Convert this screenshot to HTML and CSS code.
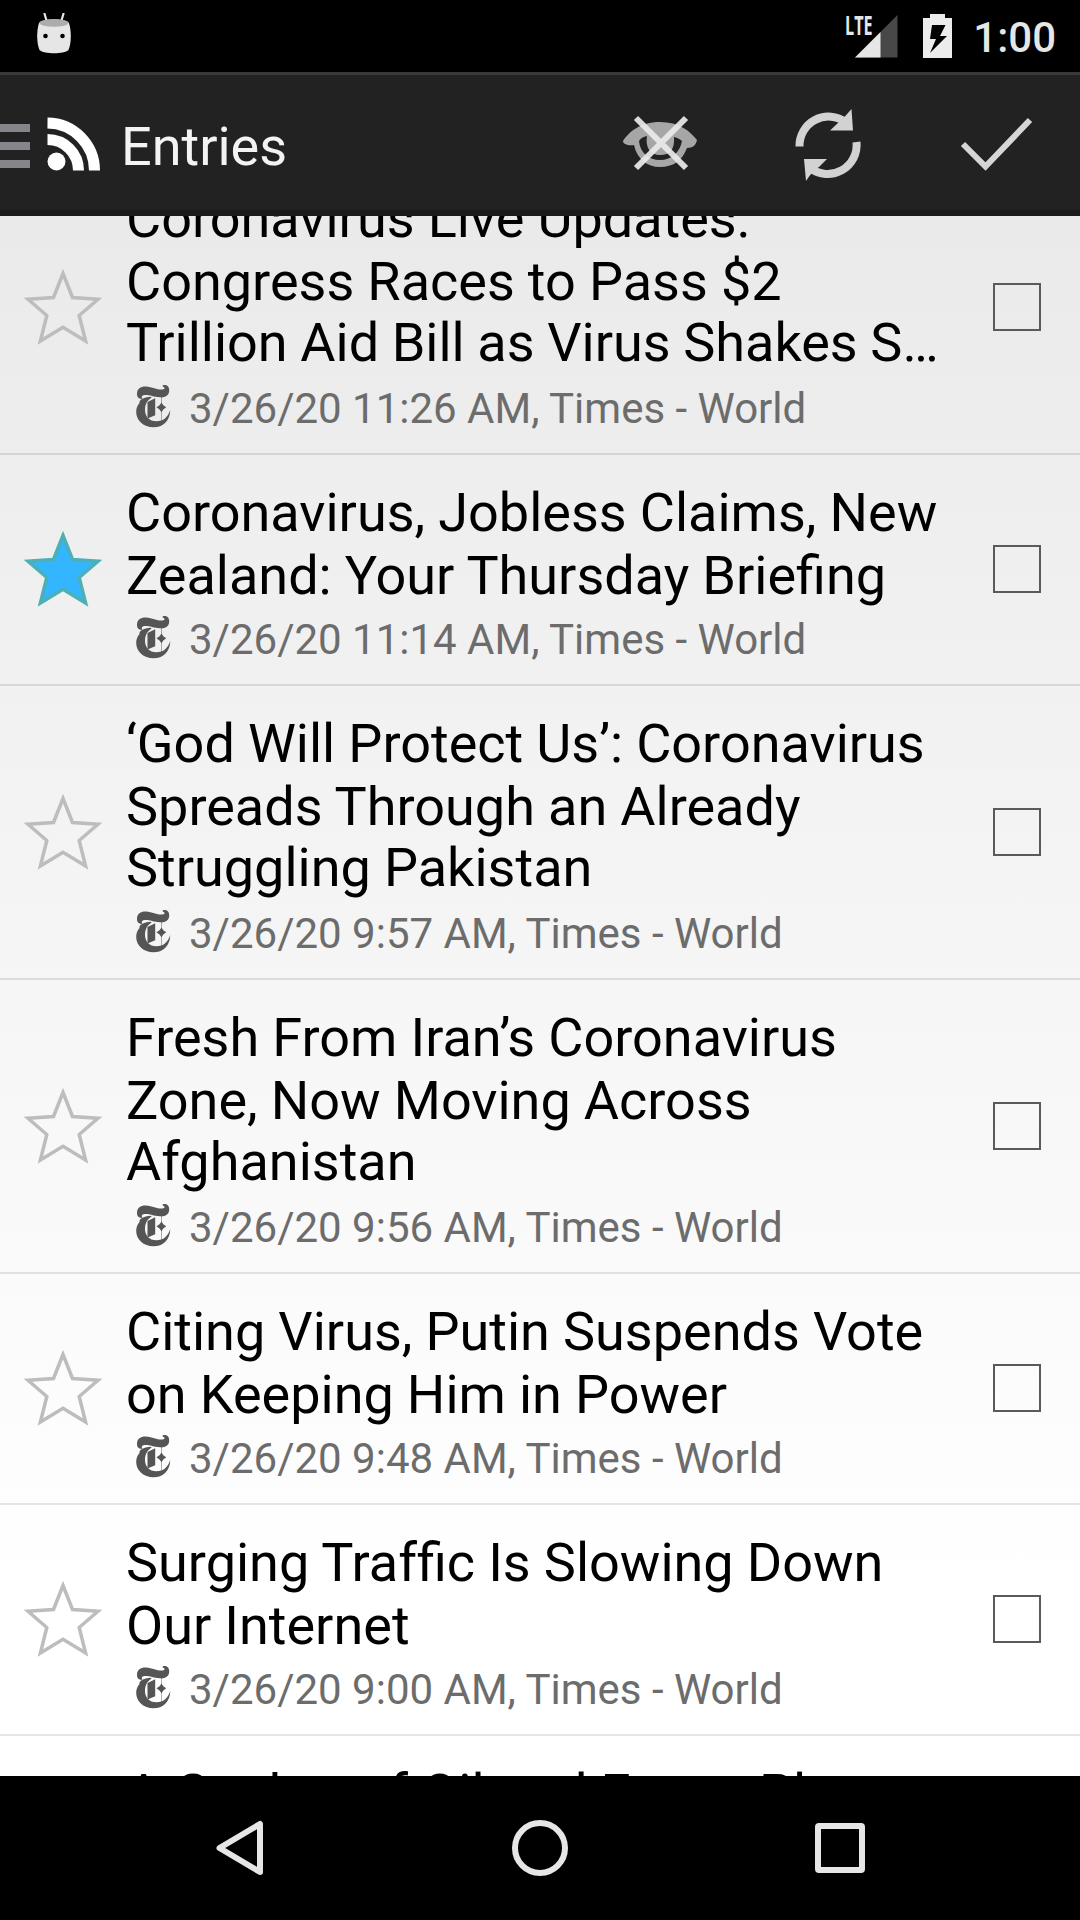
FILE: index.html
```html
<!DOCTYPE html>
<html lang="en">
<head>
<meta charset="utf-8">
<title>Entries</title>
<link rel="stylesheet" href="styles.css">
</head>
<body>
<svg class="defs" width="0" height="0" aria-hidden="true">
  <symbol id="star" viewBox="0 0 126 96">
    <path d="M63 14.500L72.500 38.500L98 40.300L79.200 56.500L85.600 82L63 68.300L40.400 82L46.800 56.500L28 40.300L53.500 38.500Z" stroke-width="3.500"/>
  </symbol>
  <symbol id="times" viewBox="0 0 36 44">
    <path d="M1.200 11C0 4 4.500 1.200 10 1.500C17 2 22 5.200 26.500 4.500C29 4 29.300 2.800 27 1.800L26.500 .5C30 -.8 33.500 1.200 33.200 6C32.800 11 28.500 12.800 24 12.300C17 11.700 13 9.500 8.500 10C6 10.300 5 11.500 6.500 14C3.500 14 1.800 13 1.200 11Z"/>
    <path d="M15 11.800C7 12.500 3 15 3.500 18C1.200 20.500 .2 23.500 .2 27C.2 35.500 7.500 42.300 17.500 42.300C27 42.300 34 36 34.300 25C31.500 32.500 27.500 36.300 20.500 36.300C13 36.300 9 31 9 25C9 19.500 11 15.500 15.500 12.800Z"/>
    <path d="M11.500 17L19.200 13.300V30.300L11.500 33.500Z"/>
    <path d="M25.500 17.500L27.300 20.300L30.200 22.300L27.300 24.500L25.500 27.200L23.500 24.500L20.500 22.300L23.500 20.300Z"/>
    <path d="M25.100 12H25.900V37H25.100Z" opacity=".6"/>
  </symbol>
</svg>
<div class="screen">
  <header class="status">
    <svg class="droid" width="34" height="42" viewBox="0 0 34 42">
      <path d="M7.300 0L9.800 8.500M26.700 0L24.200 8.500" stroke="#e6e6e6" stroke-width="2.200" fill="none"/>
      <path d="M2 10C6 5 28 5 32 10C34.500 18 34.500 30 31.500 37C27 41.300 7 41.300 2.500 37C-.5 30-.5 18 2 10Z" fill="#e6e6e6"/>
      <ellipse cx="17" cy="10" rx="14.500" ry="3.800" fill="#acacac"/>
      <circle cx="8.500" cy="23" r="2.300" fill="#000"/><circle cx="25.500" cy="23" r="2.300" fill="#000"/>
    </svg>
    <div class="status-right">
      <div class="signal">
        <span class="lte">LTE</span>
        <svg width="43" height="43" viewBox="0 0 43 43"><path d="M42.500 0V42.500H0Z" fill="#484848"/><path d="M25.500 17V42.500H0Z" fill="#e6e6e6"/></svg>
      </div>
      <svg class="battery" width="29" height="44" viewBox="0 0 29 44"><path fill="#ececec" fill-rule="evenodd" d="M7 0H22V4H29V44H0V4H7ZM9 11L7 25H13L7 39L24 22H17L22.500 11Z"/></svg>
      <span class="clock">1:00</span>
    </div>
  </header>
  <nav class="bar">
    <svg class="drawer" width="30" height="44" viewBox="0 0 30 44"><path d="M0 0H30V8H0ZM0 18H30V26H0ZM0 36H30V44H0Z" fill="#85868a"/></svg>
    <svg class="feed" width="54" height="54" viewBox="0 0 54 54" fill="none" stroke="#fff">
      <circle cx="9.500" cy="44.500" r="9" fill="#fff" stroke="none"/>
      <path d="M.5 6A47.500 47.500 0 0 1 47.500 53.500M.5 22.500A31 31 0 0 1 31.500 53.500" stroke-width="11"/>
    </svg>
    <h1 class="heading">Entries</h1>
    <div class="actions">
      <svg width="76" height="76" viewBox="0 -1 76 76">
        <path fill="#a6a6a6" fill-rule="evenodd" d="M1 32C7 23 18 13 38 13C57 13 68 22 75 31C74 36 71 39 65 39C60 52 51 58 38 58C25 58 15 50 12 36C6 37 1 35 1 32ZM17 32C18 44 27 51 38 51C50 51 58 43 60 32C58 30 56 29 52 28C53 40 48 46 38 46C28 46 23 38 25 27C21 28 19 29 17 32Z"/>
        <path d="M14 9L64 59M64 9L14 59" stroke="#e9e9e9" stroke-opacity=".93" stroke-width="6"/>
      </svg>
      <svg width="76" height="76" viewBox="0 0 76 76">
        <path d="M9.500 38.500A29 29 0 0 1 56 14.500M66.500 34A29 29 0 0 1 20 60" fill="none" stroke="#d2d2d2" stroke-width="8"/>
        <path d="M61.500 1L63 22.500H40L49 14Q52 12 61.500 1ZM14 51H37L29 59Q23 62 16 73Z" fill="#d2d2d2"/>
      </svg>
      <svg width="76" height="76" viewBox="0 0 76 76"><path d="M5 36L27.500 58.500L72 12" fill="none" stroke="#d6d6d6" stroke-width="6"/></svg>
    </div>
  </nav>
  <main class="list">
    <article class="row">
      <svg class="star"><use href="#star"/></svg>
      <div class="body"><h2><span>Coronavirus Live Updates:</span><span>Congress Races to Pass $2</span><span class="tight">Trillion Aid Bill as Virus Shakes S…</span></h2>
      <p><svg class="times"><use href="#times"/></svg>3/26/20 11:26 AM, Times - World</p></div>
      <i class="check"></i>
    </article>
    <article class="row">
      <svg class="star on"><use href="#star"/></svg>
      <div class="body"><h2><span>Coronavirus, Jobless Claims, New</span><span>Zealand: Your Thursday Briefing</span></h2>
      <p><svg class="times"><use href="#times"/></svg>3/26/20 11:14 AM, Times - World</p></div>
      <i class="check"></i>
    </article>
    <article class="row">
      <svg class="star"><use href="#star"/></svg>
      <div class="body"><h2><span>‘God Will Protect Us’: Coronavirus</span><span>Spreads Through an Already</span><span>Struggling Pakistan</span></h2>
      <p><svg class="times"><use href="#times"/></svg>3/26/20 9:57 AM, Times - World</p></div>
      <i class="check"></i>
    </article>
    <article class="row">
      <svg class="star"><use href="#star"/></svg>
      <div class="body"><h2><span>Fresh From Iran’s Coronavirus</span><span>Zone, Now Moving Across</span><span>Afghanistan</span></h2>
      <p><svg class="times"><use href="#times"/></svg>3/26/20 9:56 AM, Times - World</p></div>
      <i class="check"></i>
    </article>
    <article class="row">
      <svg class="star"><use href="#star"/></svg>
      <div class="body"><h2><span>Citing Virus, Putin Suspends Vote</span><span>on Keeping Him in Power</span></h2>
      <p><svg class="times"><use href="#times"/></svg>3/26/20 9:48 AM, Times - World</p></div>
      <i class="check"></i>
    </article>
    <article class="row">
      <svg class="star"><use href="#star"/></svg>
      <div class="body"><h2><span>Surging Traf&zwnj;fic Is Slowing Down</span><span>Our Internet</span></h2>
      <p><svg class="times"><use href="#times"/></svg>3/26/20 9:00 AM, Times - World</p></div>
      <i class="check"></i>
    </article>
    <article class="row last">
      <div class="body"><h2><span>A Gusher of Oil and Fewer Places</span></h2></div>
    </article>
  </main>
  <footer class="nav">
    <svg width="60" height="60" viewBox="0 0 60 60"><path d="M50 6V54L9.500 30Z"/></svg>
    <svg width="60" height="60" viewBox="0 0 60 60"><circle cx="30" cy="30" r="25"/></svg>
    <svg width="60" height="60" viewBox="0 0 60 60"><rect x="8" y="8" width="44" height="44" rx="1"/></svg>
  </footer>
</div>
</body>
</html>
```
FILE: styles.css
```css
* { box-sizing: border-box; margin: 0; padding: 0; }
body { width: 1080px; height: 1920px; overflow: hidden; background: #000; font-family: Roboto, "Noto Sans", sans-serif; }
svg { display: block; flex: none; }
.defs { position: absolute; }
.screen { width: 1080px; height: 1920px; display: flex; flex-direction: column; }

.status { height: 72px; flex: none; display: flex; justify-content: space-between; padding: 13px 24px 0 37px; background: #000; }
.status-right { display: flex; align-items: flex-start; }
.signal { display: flex; margin-top: 2px; }
.lte { width: 10px; color: #e6e6e6; font: 700 27px/20px "Open Sans", sans-serif; white-space: nowrap; transform: scaleX(.6); transform-origin: 0 0; }
.battery { margin: 1px 21px 0 25px; }
.clock { color: #e6e6e6; font-size: 42px; font-weight: 500; line-height: 49px; }

.bar { height: 144px; flex: none; display: flex; align-items: center; padding-top: 7px; background: #222; border-top: 3px solid #3a3a3a; border-bottom: 6px solid #1a1a1a; }
.feed { margin: -4px 0 0 17px; }
.heading { margin-left: 20px; color: #f3f3f3; font-size: 54px; font-weight: 400; line-height: 63px; }
.actions { margin-left: auto; display: flex; gap: 92px; padding-right: 46px; }

.list { height: 1560px; flex: none; overflow: hidden; background: linear-gradient(#eaeaea, #fff 88%); }
.row { display: flex; align-items: center; border-bottom: 2px solid rgba(0, 0, 0, .1); }
.row:first-child { margin-top: -55px; }
.star { width: 126px; height: 96px; margin-bottom: 1px; fill: none; stroke: #bdbdbd; }
.star.on { fill: #33b5ff; stroke: #4cb0b4; }
.body { flex: 1; padding: 26px 0 20px; }
h2 { display: flow-root; font-size: 54px; font-weight: 400; line-height: 63px; color: #000; white-space: nowrap; word-spacing: -.3px; }
h2 span { display: block; }
h2 span:nth-child(3) { margin: -2px 0 2px; }
h2 .tight { word-spacing: -.8px; }
p { display: flex; align-items: center; margin-top: 8px; font-size: 42px; line-height: 49px; color: #6c6c6c; }
.times { width: 36px; height: 44px; margin: -3px 17px 0 10px; fill: #555; }
.check { width: 48px; height: 48px; margin: 0 39px 1px 0; border: 2px solid #5a5a5a; }
.last { border: 0; padding-left: 126px; }

.nav { height: 144px; flex: none; display: flex; justify-content: center; align-items: center; gap: 240px; background: #000; }
.nav svg { fill: none; stroke: #e6e6e6; stroke-width: 6; stroke-linejoin: round; }
```
